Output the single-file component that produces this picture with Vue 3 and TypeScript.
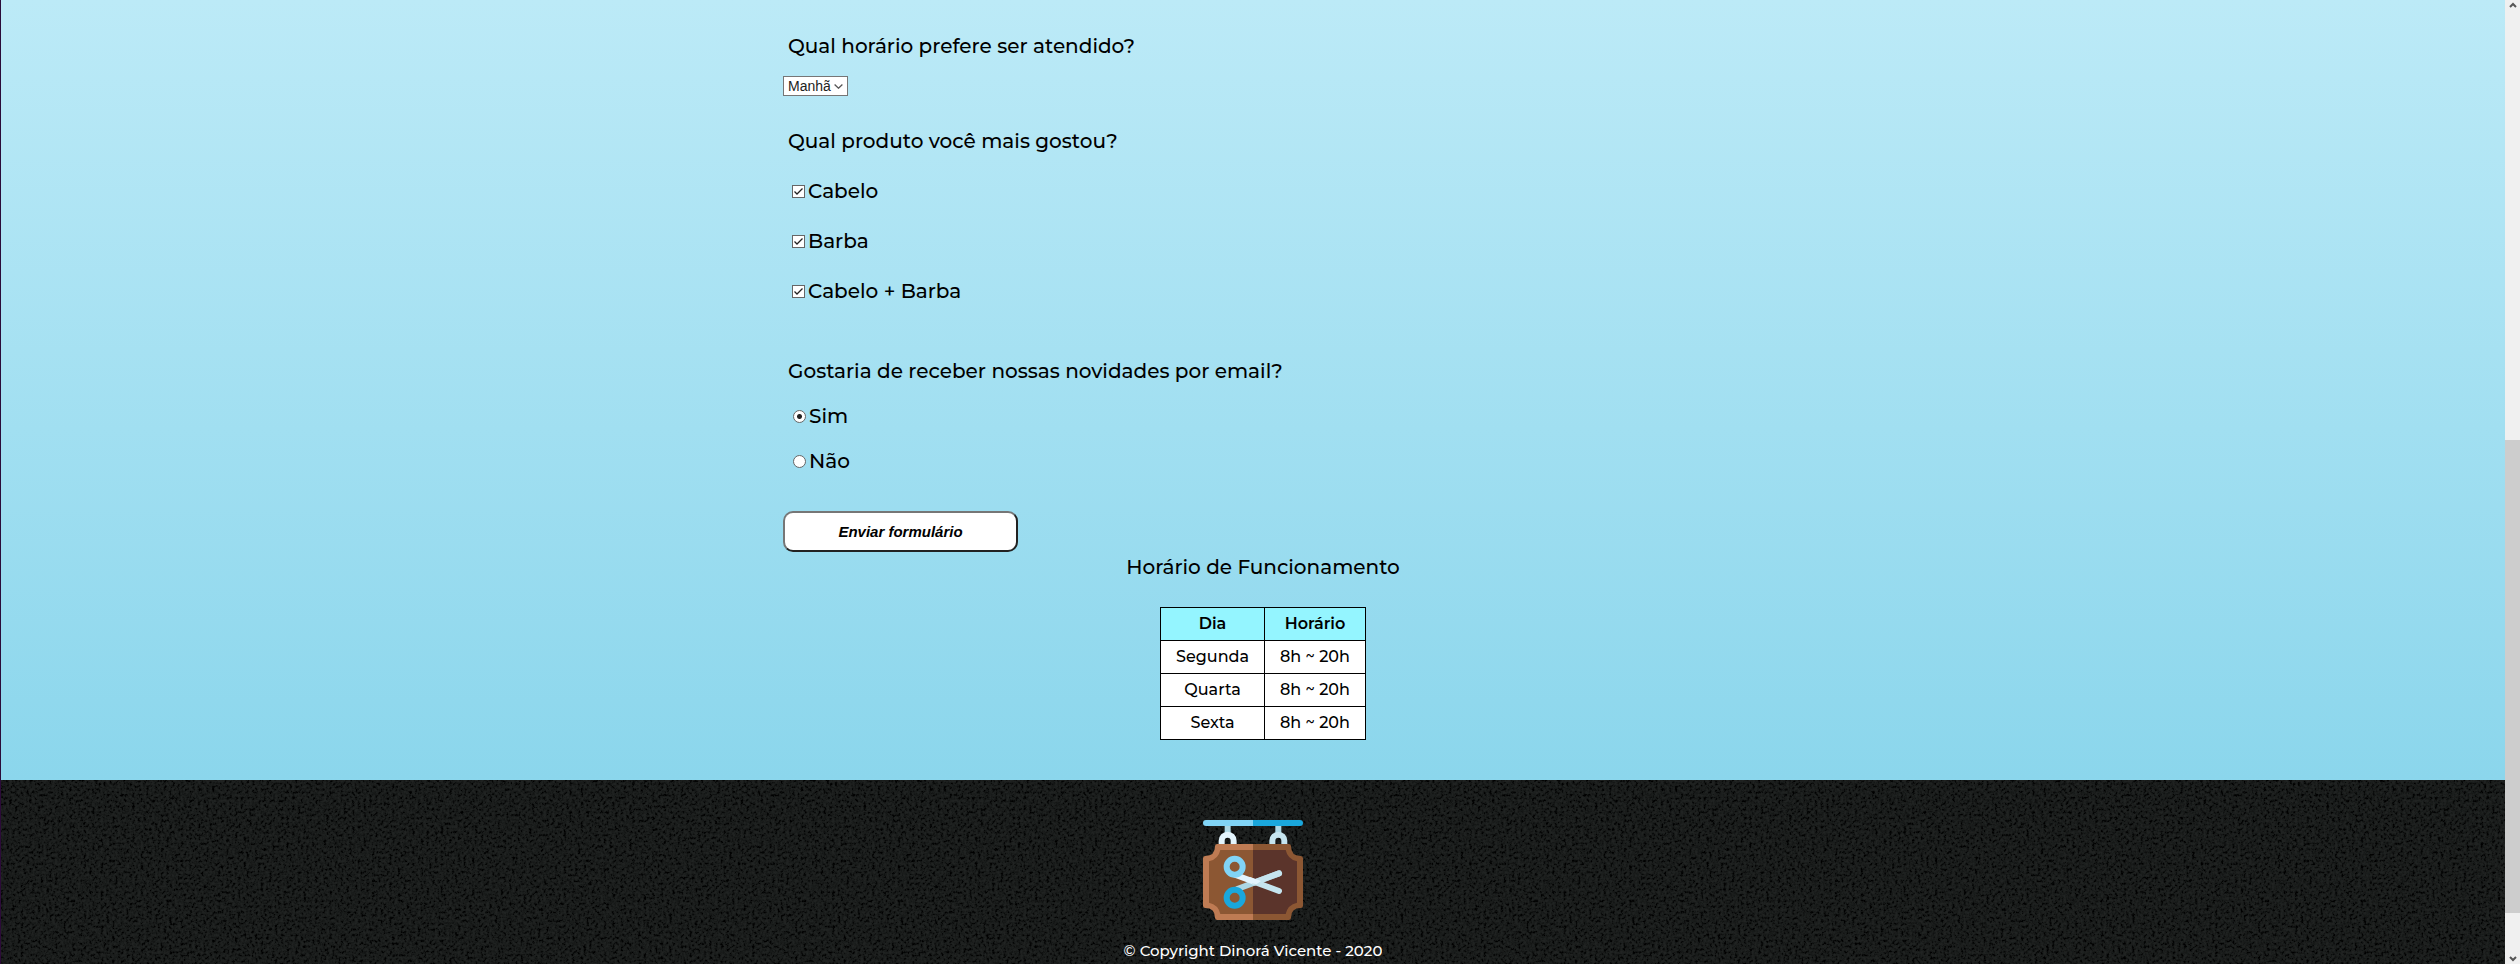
<script setup lang="ts">
import { ref } from 'vue'

interface Opening {
  day: string
  hours: string
}

const period = ref('Manhã')
const periods = ['Manhã', 'Tarde', 'Noite']
const products = ['Cabelo', 'Barba', 'Cabelo + Barba']
const chosen = ref<string[]>([...products])
const newsletter = ref('Sim')
const answers = ['Sim', 'Não']
const openings: Opening[] = [
  { day: 'Segunda', hours: '8h ~ 20h' },
  { day: 'Quarta', hours: '8h ~ 20h' },
  { day: 'Sexta', hours: '8h ~ 20h' },
]
</script>

<template>
  <div class="window">
    <div class="page">
      <main class="main">
        <div class="column">
          <form class="form" @submit.prevent>
            <label class="question" for="period">Qual horário prefere ser atendido?</label>
            <div class="picker">
              <select id="period" v-model="period" class="select">
                <option v-for="p in periods" :key="p">{{ p }}</option>
              </select>
              <svg class="chevron" viewBox="0 0 9 5" aria-hidden="true">
                <path d="M0.6 0.6 4.5 4.2 8.4 0.6" fill="none" stroke="#555" stroke-width="1.3" />
              </svg>
            </div>

            <fieldset class="group products">
              <legend class="question">Qual produto você mais gostou?</legend>
              <label v-for="p in products" :key="p" class="option">
                <input v-model="chosen" class="check" type="checkbox" :value="p" />{{ p }}
              </label>
            </fieldset>

            <fieldset class="group answers">
              <legend class="question">Gostaria de receber nossas novidades por email?</legend>
              <label v-for="a in answers" :key="a" class="option">
                <input v-model="newsletter" class="radio" type="radio" name="newsletter" :value="a" />{{ a }}
              </label>
            </fieldset>

            <button class="submit" type="submit">Enviar formulário</button>
          </form>

          <table class="hours">
            <caption class="caption">Horário de Funcionamento</caption>
            <thead>
              <tr>
                <th scope="col">Dia</th>
                <th scope="col">Horário</th>
              </tr>
            </thead>
            <tbody>
              <tr v-for="o in openings" :key="o.day">
                <td>{{ o.day }}</td>
                <td>{{ o.hours }}</td>
              </tr>
            </tbody>
          </table>
        </div>
      </main>

      <footer class="footer">
        <svg class="grain" aria-hidden="true">
          <filter id="grain" x="0" y="0" width="100%" height="100%" color-interpolation-filters="sRGB">
            <feTurbulence type="fractalNoise" baseFrequency="0.35" numOctaves="3" seed="4" />
            <feColorMatrix
              type="matrix"
              values="1 0 0 0 0
                      1 0 0 0 0
                      1 0 0 0 0
                      0 0 0 0 1"
            />
            <feComponentTransfer>
              <feFuncR type="table" tableValues="0 0 0 0.03 0.078 0.1 0.114 0.125 0.13 0.13 0.13" />
              <feFuncG type="table" tableValues="0 0 0 0.036 0.086 0.11 0.124 0.136 0.14 0.14 0.14" />
              <feFuncB type="table" tableValues="0 0 0 0.034 0.083 0.106 0.12 0.132 0.136 0.136 0.136" />
            </feComponentTransfer>
          </filter>
          <rect width="100%" height="100%" filter="url(#grain)" />
        </svg>
        <svg class="logo" viewBox="0 0 300 300" role="img" aria-label="Barbearia">
          <path d="M9 0H150V18H9A9 9 0 0 1 9 0Z" fill="#81d4f6" />
          <path d="M150 0H291A9 9 0 0 1 291 18H150Z" fill="#1aa7dc" />
          <path d="M65 18H83V42H65ZM217 18H235V42H217Z" fill="#acd7e5" />
          <path d="M47 76V62A27 27 0 0 1 101 62V76H83V62A9 9 0 0 0 65 62V76Z" fill="#e3f4fd" />
          <path d="M199 76V62A27 27 0 0 1 253 62V76H235V62A9 9 0 0 0 217 62V76Z" fill="#c5e4ee" />
          <path
            d="M150 72H43Q36 72 36 79Q36 108 7 108Q0 108 0 115V257Q0 264 7 264Q36 264 36 293Q36 300 43 300H150Z"
            fill="#be7b53"
          />
          <path
            d="M150 72H257Q264 72 264 79Q264 108 293 108Q300 108 300 115V257Q300 264 293 264Q264 264 264 293Q264 300 257 300H150Z"
            fill="#8c5733"
          />
          <path d="M150 90H52Q46 118 18 124V248Q46 254 52 282H150Z" fill="#8c5733" />
          <path d="M150 90H248Q254 118 282 124V248Q254 254 248 282H150Z" fill="#5b342b" />
          <path d="M103 207 228 160" stroke="#acd7e5" stroke-width="18" stroke-linecap="round" />
          <path d="M155 187 228 160" stroke="#c5e4ee" stroke-width="18" stroke-linecap="round" />
          <path d="M98 165 155 186" stroke="#e3f4fd" stroke-width="18" stroke-linecap="round" />
          <path d="M155 186 228 213" stroke="#c5e4ee" stroke-width="18" stroke-linecap="round" />
          <path d="M141 171 174 183 160 193 128 185Z" fill="#e3f4fd" />
          <circle cx="95" cy="140" r="24" fill="none" stroke="#81d4f6" stroke-width="18" />
          <circle cx="95" cy="233" r="24" fill="none" stroke="#1aa7dc" stroke-width="18" />
        </svg>
        <p class="copyright">© Copyright Dinorá Vicente - 2020</p>
      </footer>
    </div>

    <div class="scrollbar" aria-hidden="true">
      <svg class="arrow" viewBox="0 0 8 6"><path d="M1 5 4 2 7 5" fill="none" stroke="#555" stroke-width="2" /></svg>
      <div class="track"><div class="thumb"></div></div>
      <svg class="arrow" viewBox="0 0 8 6"><path d="M1 1 4 4 7 1" fill="none" stroke="#555" stroke-width="2" /></svg>
    </div>
  </div>
</template>

<style>
body {
  margin: 0;
}
</style>

<style scoped>
.window {
  display: flex;
  height: 100vh;
  overflow: hidden;
  font-family: Montserrat, Inter, "Open Sans", sans-serif;
  color: #000;
}

.page {
  display: flex;
  flex: 1;
  flex-direction: column;
  border-left: 1px solid #2b0b38;
}

.main {
  padding: 34px 0 40px;
  background: linear-gradient(#bceaf7, #8bd6ec);
}

.column {
  max-width: 940px;
  margin: 0 auto;
}

.form {
  display: flex;
  flex-direction: column;
  align-items: flex-start;
  font-size: 20px;
  font-weight: 500;
  line-height: 24px;
}

.question {
  padding: 0 0 0 5px;
}

.picker {
  position: relative;
  margin: 18px 0 33px;
}

.select {
  display: block;
  width: 65px;
  height: 20px;
  padding: 0 0 0 4px;
  border: 1px solid #767676;
  border-radius: 0;
  background: #fff;
  color: #222;
  font: 14px/18px "Liberation Sans", Arial, sans-serif;
  appearance: none;
}

.chevron {
  position: absolute;
  top: 8px;
  right: 5px;
  width: 9px;
  height: 5px;
  pointer-events: none;
}

.group {
  display: flex;
  flex-direction: column;
  margin: 0;
  padding: 0;
  border: 0;
}

.option {
  display: flex;
  align-items: center;
  gap: 3px;
  padding-left: 9px;
}

.products .option {
  margin-top: 26px;
}

.products {
  margin-bottom: 56px;
}

.answers .option {
  margin-top: 21px;
  padding-left: 10px;
}

.answers {
  margin-bottom: 38px;
}

.check,
.radio {
  width: 13px;
  height: 13px;
  margin: 0;
  border: 1px solid #666;
  background: #fff center / 11px 11px no-repeat;
  appearance: none;
}

.check:checked {
  background-image: url("data:image/svg+xml,%3Csvg xmlns='http://www.w3.org/2000/svg' viewBox='0 0 11 11'%3E%3Cpath d='M1.5 5.5 4 8 9.5 2.5' fill='none' stroke='%23222' stroke-width='1.3'/%3E%3C/svg%3E");
}

.radio {
  border-radius: 50%;
}

.radio:checked {
  background-image: radial-gradient(circle, #222 2px, transparent 3px);
}

.submit {
  width: 235px;
  height: 41px;
  padding: 0;
  border: 2px solid;
  border-color: #767676 #222 #222 #767676;
  border-radius: 10px;
  background: #fff;
  color: #000;
  font: italic bold 15px/20px "Liberation Sans", Arial, sans-serif;
}

.hours {
  position: relative;
  margin: 3px auto 0;
  left: 10px;
  border-collapse: collapse;
  background: #fff;
  font-size: 16px;
  line-height: 20px;
  text-align: center;
}

.caption {
  margin: 0 -40px;
  padding-bottom: 28px;
  font-size: 20px;
  font-weight: 500;
  line-height: 24px;
  white-space: nowrap;
}

.hours th,
.hours td {
  padding: 6px 15px;
  border: 1px solid #000;
  font-weight: 500;
}

.hours th {
  background: #94f5ff;
  font-weight: 600;
}

.footer {
  position: relative;
  display: flex;
  flex: 1;
  flex-direction: column;
  align-items: center;
  padding-top: 40px;
  background: #1c1f1e;
}

.grain {
  position: absolute;
  inset: 0;
  width: 100%;
  height: 100%;
}

.logo {
  position: relative;
  width: 100px;
  height: 100px;
}

.copyright {
  position: relative;
  margin: 20px 0 0;
  color: #fff;
  font-size: 15px;
  font-weight: 500;
  line-height: 22px;
}

.scrollbar {
  display: flex;
  flex-direction: column;
  align-items: center;
  width: 15px;
  background: #f0f0f0;
}

.arrow {
  width: 8px;
  height: 6px;
  margin: 2px 0;
}

.track {
  display: flex;
  flex: 1;
  flex-direction: column;
  justify-content: flex-end;
  align-self: stretch;
  padding-bottom: 41px;
}

.thumb {
  height: 52.4%;
  background: #cdcdcd;
}
</style>
